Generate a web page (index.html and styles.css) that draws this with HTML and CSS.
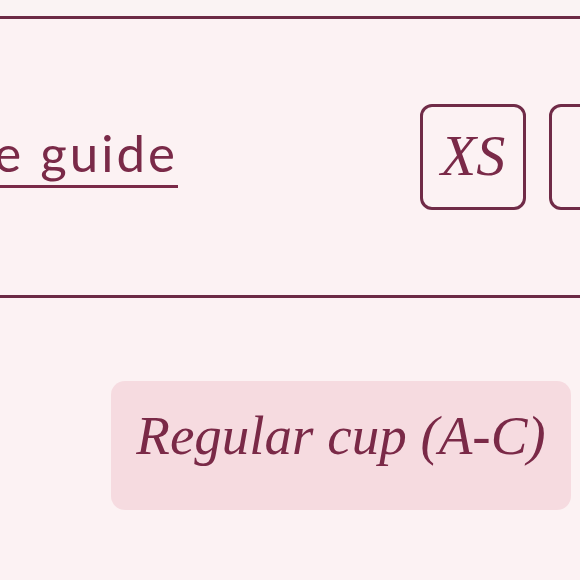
FILE: index.html
```html
<!DOCTYPE html>
<html lang="en">
<head>
<meta charset="utf-8">
<title>Size selector</title>
<link rel="stylesheet" href="styles.css">
</head>
<body>
<div class="top-strip"></div>
<section class="size-bar">
  <div class="guide-cell">
    <a class="size-guide" href="#">Size guide</a>
  </div>
  <div class="sizes">
    <button class="size-btn">XS</button>
    <button class="size-btn">S</button>
    <button class="size-btn">M</button>
  </div>
</section>
<section class="cups">
  <div class="cup-pill">Regular cup (A-C)</div>
</section>
</body>
</html>
```
FILE: styles.css
```css
html, body {
  margin: 0;
  padding: 0;
  background: #fcf2f3;
  width: 580px;
  height: 580px;
  overflow: hidden;
}

.top-strip {
  height: 16px;
  background: #faf3f3;
}

.size-bar {
  height: 276px;
  border-top: 3px solid #6c2a45;
  border-bottom: 3px solid #6c2a45;
  display: flex;
  align-items: center;
  overflow: hidden;
}

.guide-cell {
  flex: 0 0 178px;
  width: 178px;
  display: flex;
  justify-content: flex-end;
}

.size-guide {
  display: block;
  white-space: nowrap;
  font-family: Lato, "Open Sans", sans-serif;
  font-weight: 400;
  font-size: 51px;
  line-height: 1;
  letter-spacing: 3px;
  word-spacing: 0;
  color: #7a2a48;
  text-decoration: none;
  padding-bottom: 7px;
  border-bottom: 3px solid #7a2a48;
}

.sizes {
  display: flex;
  gap: 23px;
  margin-left: 242px;
  flex: 0 0 auto;
}

.size-btn {
  box-sizing: border-box;
  width: 106px;
  height: 106px;
  border: 3px solid #702b47;
  border-radius: 12px;
  background: transparent;
  font-family: "Liberation Serif", serif;
  font-style: italic;
  font-size: 58px;
  color: #7a2a48;
  padding: 0 0 4px 0;
  display: flex;
  align-items: center;
  justify-content: center;
}

.cups {
  padding-top: 83px;
  padding-left: 111px;
}

.cup-pill {
  box-sizing: border-box;
  width: 460px;
  height: 129px;
  border-radius: 14px;
  background: #f6dbe0;
  display: flex;
  align-items: center;
  justify-content: center;
  padding-bottom: 20px;
  font-family: "Liberation Serif", serif;
  font-style: italic;
  font-size: 55px;
  color: #7a2947;
}
```
